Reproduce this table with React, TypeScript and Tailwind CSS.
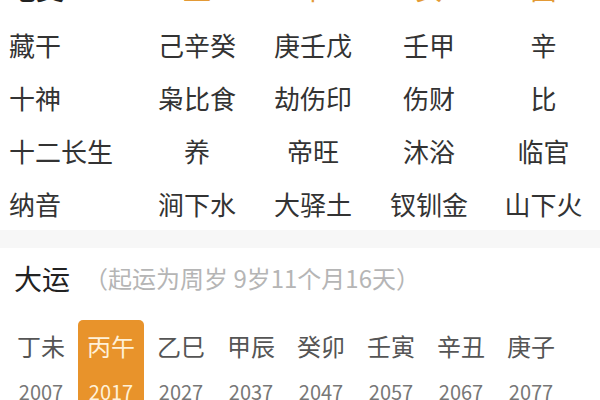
const font = { fontFamily: '"Noto Sans CJK SC", "Noto Sans", sans-serif' };

const rows: { label: string; cells: string[] }[] = [
  { label: "藏干", cells: ["己辛癸", "庚壬戊", "壬甲", "辛"] },
  { label: "十神", cells: ["枭比食", "劫伤印", "伤财", "比"] },
  { label: "十二长生", cells: ["养", "帝旺", "沐浴", "临官"] },
  { label: "纳音", cells: ["涧下水", "大驿土", "钗钏金", "山下火"] },
];

const dayun: { gz: string; year: string }[] = [
  { gz: "丁未", year: "2007" },
  { gz: "丙午", year: "2017" },
  { gz: "乙巳", year: "2027" },
  { gz: "甲辰", year: "2037" },
  { gz: "癸卯", year: "2047" },
  { gz: "壬寅", year: "2057" },
  { gz: "辛丑", year: "2067" },
  { gz: "庚子", year: "2077" },
];

const gridCols = "grid grid-cols-[139px_116px_116px_116px_1fr]";

export default function App() {
  return (
    <div className="w-[600px] h-[400px] overflow-hidden bg-white" style={font}>
      {/* previous row, only the bottom of the glyphs is visible */}
      <div className="h-[4px] overflow-hidden">
        <div className={`${gridCols} -mt-[26px] text-[28px] leading-[28px]`}>
          <div className="pl-[8px] text-[#222]">地支</div>
          <div className="text-center text-[#e39a36]">丑</div>
          <div className="text-center text-[#e39a36]">申</div>
          <div className="text-center text-[#e39a36]">亥</div>
          <div className="text-center text-[#e39a36]">酉</div>
        </div>
      </div>

      <div className="mt-[14px]">
        {rows.map((r) => (
          <div key={r.label} className={`${gridCols} h-[53px] items-center text-[26px] text-[#333]`}>
            <div className="pl-[9px]">{r.label}</div>
            {r.cells.map((c, i) => (
              <div key={i} className="text-center">
                {c}
              </div>
            ))}
          </div>
        ))}
      </div>

      <div className="h-[18px] bg-[#f7f7f7]" />

      <div className="h-[60px] flex items-center pl-[14px]">
        <span className="text-[28px] text-[#222]">大运</span>
        <span className="ml-[14px] text-[24px] text-[#b5b5b5]">（起运为周岁 9岁11个月16天）</span>
      </div>

      <div className="mt-[12px] flex pl-[6px]">
        {dayun.map((d, i) => {
          const active = i === 1;
          return (
            <div key={d.year} className="w-[70px] px-[2px]">
              <div
                className={`h-[80px] flex flex-col items-center pt-[10px] rounded-t-[5px] ${
                  active ? "bg-[#e8932b] text-[#fff1d8]" : ""
                }`}
              >
                <div className={`text-[24px] leading-[32px] ${active ? "" : "text-[#555]"}`}>{d.gz}</div>
                <div className={`mt-[16px] text-[20px] leading-[28px] ${active ? "" : "text-[#777]"}`}>
                  {d.year}
                </div>
              </div>
            </div>
          );
        })}
      </div>
    </div>
  );
}
